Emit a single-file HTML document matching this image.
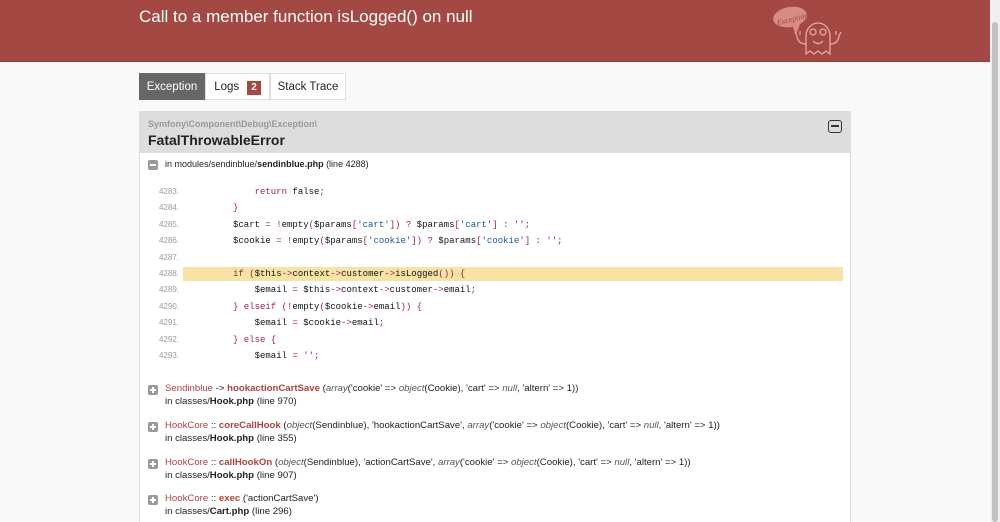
<!DOCTYPE html>
<html><head><meta charset="utf-8"><style>
*{margin:0;padding:0;box-sizing:border-box}
html,body{width:1000px;height:522px;overflow:hidden}
body{background:#f9f9f9;font-family:"Liberation Sans",Arial,sans-serif;color:#222;position:relative}
.hdr{position:absolute;left:0;top:0;width:990px;height:62px;background:#a34843;border-bottom:1px solid #8e3a36}
.hdr h1{position:absolute;left:139px;top:7px;font-size:17px;font-weight:normal;color:#fff}
.sb{position:absolute;left:990px;top:0;width:10px;height:522px;background:#f0f0f0}
.sb div{position:absolute;left:2px;top:22px;width:6px;height:500px;background:#c2c2c2;border-radius:3px}
.tabs{position:absolute;left:139px;top:73px;height:27px;display:flex;font-size:11.5px}
.tab{border:1px solid #ddd;background:#fff;line-height:26px;color:#222;text-align:center}
.tab.act{background:#666;color:#fff;border-color:#666}
.badge{display:inline-block;background:#a34843;color:#fff;font-weight:bold;font-size:10px;line-height:14px;padding:0 4px;margin-left:8px}
.panel{position:absolute;left:139px;top:111px;width:712px;height:420px;background:#fff;border:1px solid #ddd}
.ph{height:41px;background:#ddd;padding:7px 8px}
.ns{font-size:9px;color:#999;font-weight:bold}
.cls{font-size:14px;font-weight:bold;margin-top:3px}
.tog{position:absolute;left:688px;top:8px;width:14px;height:13px;border:1.5px solid #333;border-radius:3px}
.tog:after{content:"";position:absolute;left:2px;right:2px;top:4px;height:2px;background:#333}
.ico{position:absolute;width:10px;height:10px;background:#999;border-radius:2px}
.ico.m:after{content:"";position:absolute;left:2px;right:2px;top:4px;height:2px;background:#fff}
.ico.p:before{content:"";position:absolute;left:4px;top:2px;bottom:2px;width:2px;background:#fff}
.ico.p:after{content:"";position:absolute;left:2px;right:2px;top:4px;height:2px;background:#fff}
.t{position:absolute;font-size:9px;white-space:nowrap;color:#222}
.code{position:absolute;left:0;top:72px;width:704px;font-family:"Liberation Mono",monospace;font-size:9px}
.ln{position:relative;height:16.4px;line-height:16.4px}
.ln .n{position:absolute;left:0;width:39px;text-align:right;color:#999;font-family:"Liberation Sans",Arial,sans-serif;font-size:8px}
.ln .c{position:absolute;left:93px;white-space:pre;color:#111}
.ln.hl .c{left:43px;padding-left:50px;width:660px;background:#f7e4a4;height:14px;top:1px;line-height:14px}
.k{color:#a3204a}.s{color:#1b55a5}
.tr{position:absolute;left:25px;font-size:9.6px;white-space:nowrap}
.tr .a{color:#b0413e}.tr b{color:#b0413e}
.tr i{color:#555}
.tr .l{display:block;margin-top:2px;color:#222}
</style></head><body>
<div class="hdr"><h1>Call to a member function isLogged() on null</h1>
<svg style="position:absolute;left:772px;top:6px" width="80" height="50" viewBox="0 0 80 50" fill="none" stroke="#e7a8a3" stroke-width="1.3">
<ellipse cx="18" cy="11" rx="17" ry="10" fill="#d88c86" stroke="none" transform="rotate(-10 18 11)"/><path d="M20 19 L24 29 L28 18" fill="#d88c86" stroke="none"/>
<text x="4" y="16" font-size="8" font-style="italic" fill="#a34843" stroke="none" font-family="Liberation Serif,serif" transform="rotate(-14 18 11)">Exception!</text>
<path d="M34 48 V30 a12 13 0 0 1 24 0 V48 l-4 -3 l-4 3 l-4 -3 l-4 3 l-4 -3 z"/>
<circle cx="41" cy="26" r="3"/><circle cx="51" cy="26" r="3"/><path d="M41 35 q5 5 10 0"/>
<path d="M34 38 q-8 0 -9 -8 M25 30 l-2 -4 M28 29 l0 -4 M58 38 q8 0 9 -8 M67 30 l2 -4 M64 29 l0 -4"/></svg>
</div>
<div class="sb"><div></div></div>
<div class="tabs"><div class="tab act" style="width:66px">Exception</div><div class="tab" style="width:65px">Logs<span class="badge">2</span></div><div class="tab" style="width:76px">Stack Trace</div></div>
<div class="panel">
<div class="ph"><div class="ns">Symfony\Component\Debug\Exception\</div><div class="cls">FatalThrowableError</div><div class="tog"></div></div>
<div class="ico m" style="left:8px;top:48px"></div>
<div class="t" style="left:25px;top:47px">in modules/sendinblue/<b>sendinblue.php</b> (line 4288)</div>
<div class="code">
<div class="ln"><span class="n">4283.</span><span class="c">    <span class="k">return</span> false<span class="k">;</span></span></div>
<div class="ln"><span class="n">4284.</span><span class="c"><span class="k">}</span></span></div>
<div class="ln"><span class="n">4285.</span><span class="c">$cart <span class="k">= !</span>empty<span class="k">(</span>$params<span class="k">[</span><span class="s">'cart'</span><span class="k">]) ?</span> $params<span class="k">[</span><span class="s">'cart'</span><span class="k">] : '';</span></span></div>
<div class="ln"><span class="n">4286.</span><span class="c">$cookie <span class="k">= !</span>empty<span class="k">(</span>$params<span class="k">[</span><span class="s">'cookie'</span><span class="k">]) ?</span> $params<span class="k">[</span><span class="s">'cookie'</span><span class="k">] : '';</span></span></div>
<div class="ln"><span class="n">4287.</span><span class="c"></span></div>
<div class="ln hl"><span class="n">4288.</span><span class="c"><span class="k">if (</span>$this<span class="k">-&gt;</span>context<span class="k">-&gt;</span>customer<span class="k">-&gt;</span>isLogged<span class="k">()) {</span></span></div>
<div class="ln"><span class="n">4289.</span><span class="c">    $email <span class="k">=</span> $this<span class="k">-&gt;</span>context<span class="k">-&gt;</span>customer<span class="k">-&gt;</span>email<span class="k">;</span></span></div>
<div class="ln"><span class="n">4290.</span><span class="c"><span class="k">} elseif (!</span>empty<span class="k">(</span>$cookie<span class="k">-&gt;</span>email<span class="k">)) {</span></span></div>
<div class="ln"><span class="n">4291.</span><span class="c">    $email <span class="k">=</span> $cookie<span class="k">-&gt;</span>email<span class="k">;</span></span></div>
<div class="ln"><span class="n">4292.</span><span class="c"><span class="k">} else {</span></span></div>
<div class="ln"><span class="n">4293.</span><span class="c">    $email <span class="k">= '';</span></span></div>
</div>
<div class="ico p" style="left:8px;top:273px"></div>
<div class="tr" style="top:271px"><span class="a">Sendinblue</span> -&gt; <b>hookactionCartSave</b> (<i>array</i>('cookie' =&gt; <i>object</i>(Cookie), 'cart' =&gt; <i>null</i>, 'altern' =&gt; 1))<span class="l">in classes/<b style="color:#222">Hook.php</b> (line 970)</span></div>
<div class="ico p" style="left:8px;top:310px"></div>
<div class="tr" style="top:308px"><span class="a">HookCore</span> :: <b>coreCallHook</b> (<i>object</i>(Sendinblue), 'hookactionCartSave', <i>array</i>('cookie' =&gt; <i>object</i>(Cookie), 'cart' =&gt; <i>null</i>, 'altern' =&gt; 1))<span class="l">in classes/<b style="color:#222">Hook.php</b> (line 355)</span></div>
<div class="ico p" style="left:8px;top:347px"></div>
<div class="tr" style="top:345px"><span class="a">HookCore</span> :: <b>callHookOn</b> (<i>object</i>(Sendinblue), 'actionCartSave', <i>array</i>('cookie' =&gt; <i>object</i>(Cookie), 'cart' =&gt; <i>null</i>, 'altern' =&gt; 1))<span class="l">in classes/<b style="color:#222">Hook.php</b> (line 907)</span></div>
<div class="ico p" style="left:8px;top:383px"></div>
<div class="tr" style="top:381px"><span class="a">HookCore</span> :: <b>exec</b> ('actionCartSave')<span class="l">in classes/<b style="color:#222">Cart.php</b> (line 296)</span></div>
</div>
</body></html>
